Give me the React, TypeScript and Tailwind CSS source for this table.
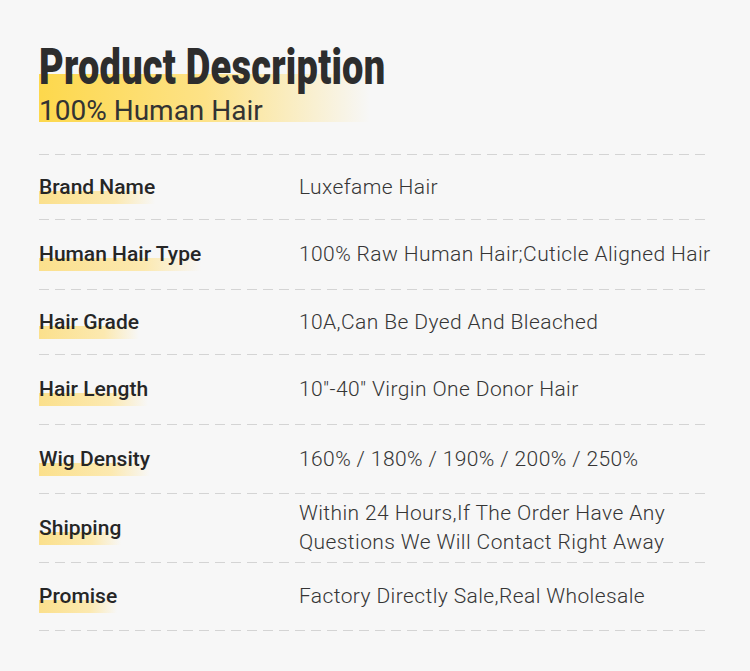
const rows = [
  { label: "Brand Name", value: ["Luxefame Hair"], h: "h-[64px]" },
  { label: "Human Hair Type", value: ["100% Raw Human Hair;Cuticle Aligned Hair"], h: "h-[69px]" },
  { label: "Hair Grade", value: ["10A,Can Be Dyed And Bleached"], h: "h-[64px]" },
  { label: "Hair Length", value: ['10"-40" Virgin One Donor Hair'], h: "h-[69px]" },
  { label: "Wig Density", value: ["160% / 180% / 190% / 200% / 250%"], h: "h-[68px]" },
  {
    label: "Shipping",
    value: ["Within 24 Hours,If The Order Have Any", "Questions We Will Contact Right Away"],
    h: "h-[68px]",
  },
  { label: "Promise", value: ["Factory Directly Sale,Real Wholesale"], h: "h-[67px]" },
];

function Dashed() {
  return (
    <div className="h-px w-full bg-[repeating-linear-gradient(to_right,#d4d4d4_0px,#d4d4d4_10px,transparent_10px,transparent_16px)]" />
  );
}

export default function App() {
  return (
    <main className="min-h-[671px] w-[750px] bg-[#f7f7f7] pl-[39px] pt-[42px] font-['Roboto',sans-serif] text-[#2b2b2b]">
      <header className="w-[667px]">
        <h1 className="relative z-10 h-[50px] whitespace-nowrap">
          <span className="inline-block origin-left scale-x-[0.76] text-[50px] leading-[50px] font-black tracking-[0.3px] text-[#2d2d2d]">
            Product Description
          </span>
        </h1>
        <div className="-mt-[18px] h-[48px] w-[331px] bg-[linear-gradient(to_right,#fdd84c_0%,#fde287_50%,rgba(253,236,170,0)_100%)] pt-[23px]">
          <div className="text-[28px] leading-[28px] font-normal text-[#333]">100% Human Hair</div>
        </div>
      </header>

      <section className="mt-[32px] w-[667px]">
        <Dashed />
        {rows.map((r) => (
          <div key={r.label}>
            <div className={`flex items-center ${r.h}`}>
              <div className="w-[260px] shrink-0 pt-[4px]">
                <span className="inline-block bg-[linear-gradient(to_right,#fbe08c_0%,#fce9b0_65%,rgba(253,243,210,0)_100%)] bg-[length:100%_13px] bg-bottom bg-no-repeat pb-[4px] text-[21px] leading-[25px] font-medium text-[#262626]">
                  {r.label}
                </span>
              </div>
              <div className="text-[21px] leading-[29px] font-light tracking-[0.4px] text-[#353535]">
                {r.value.map((v) => (
                  <div key={v} className="whitespace-nowrap">
                    {v}
                  </div>
                ))}
              </div>
            </div>
            <Dashed />
          </div>
        ))}
      </section>
    </main>
  );
}
